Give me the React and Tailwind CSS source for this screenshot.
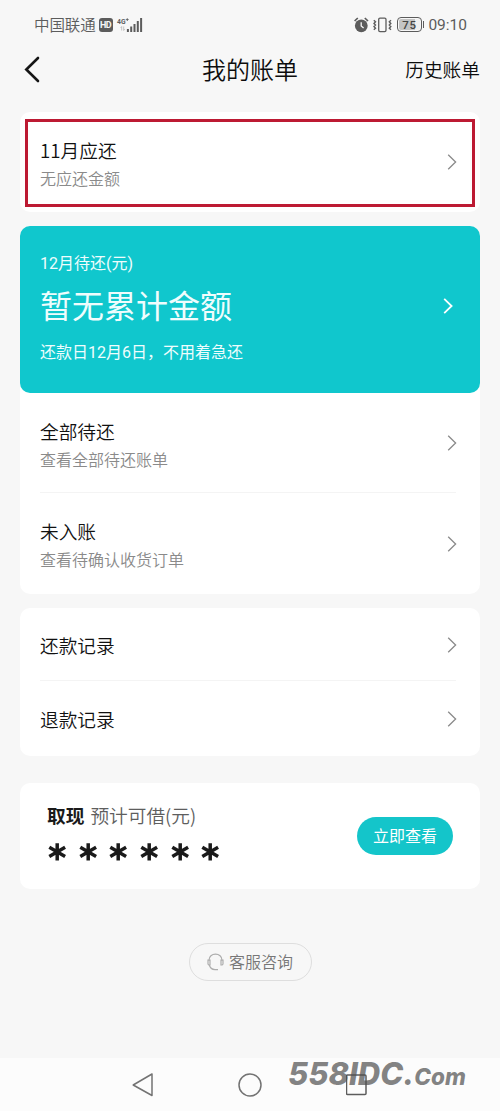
import React from "react";

const Chevron = ({ className = "text-[#8a8a8a] -mr-px", strokeWidth = 1.3 }) => (
  <svg width="10" height="16" viewBox="0 0 10 16" fill="none" stroke="currentColor" strokeWidth={strokeWidth} className={className}>
    <path d="M1.2 0.8 L8.6 8 L1.2 15.2" />
  </svg>
);

const StatusBar = () => (
  <div className="h-[49px] flex items-center justify-between pl-[34px] pr-[33px] text-[#5c5c5c]">
    <div className="flex items-center">
      <span className="text-[15.5px] leading-none tracking-[-0.1px]">中国联通</span>
      <span className="ml-[3px] w-[14px] h-[14px] rounded-[3px] bg-[#5c5c5c] text-[#f7f7f7] text-[9px] font-bold leading-[14px] text-center tracking-[-0.4px] font-[Roboto]">
        HD
      </span>
      <svg width="28" height="16" viewBox="0 0 28 16" className="ml-[3px]" fill="#5c5c5c">
        <text x="1" y="7.2" fontFamily="Roboto" fontSize="8" fontWeight="700" textLength="8.5" lengthAdjust="spacingAndGlyphs">4G</text>
        <path d="M9.8 2.2h1v-1h.9v1h1v.9h-1v1h-.9v-1h-1z" />
        <path d="M5.7 9.5v4M4.7 11l1-1.5M7.7 9.5v4M8.7 12l-1 1.5" stroke="#b9b9b9" strokeWidth="0.8" fill="none" />
        <rect x="10.9" y="12" width="2" height="3" />
        <rect x="14.2" y="9.5" width="2" height="5.5" />
        <rect x="17.5" y="7" width="2" height="8" />
        <rect x="20.8" y="4" width="2" height="11" />
        <rect x="24.1" y="1" width="2" height="14" />
      </svg>
    </div>
    <div className="flex items-center">
      <svg width="15" height="16" viewBox="0 0 15 16" className="mr-[4px]">
        <circle cx="7.3" cy="8.8" r="6.4" fill="#5c5c5c" />
        <path d="M0.6 4 L3.8 1 M14 4 L10.8 1" stroke="#5c5c5c" strokeWidth="1.7" />
        <path d="M7.2 5.2 V9 L9.6 11" stroke="#f7f7f7" strokeWidth="1.3" fill="none" />
      </svg>
      <svg width="19" height="16" viewBox="0 0 19 16" className="mr-[5px]" fill="none" stroke="#5c5c5c">
        <rect x="5.7" y="1.2" width="7.3" height="13.4" rx="1.3" strokeWidth="1.3" />
        <path d="M0.8 3.2 l1.7 1.6 l-1.5 1.6 l1.5 1.6 l-1.5 1.6 l1.5 1.6 l-1.7 1.6 M18 3.2 l-1.7 1.6 l1.5 1.6 l-1.5 1.6 l1.5 1.6 l-1.5 1.6 l1.7 1.6" strokeWidth="1.4" />
      </svg>
      <div className="w-[25px] h-[15px] rounded-[4px] border border-[#5c5c5c] p-px">
        <div className="h-full w-full rounded-[2px] bg-[linear-gradient(90deg,#c4c4c4_75%,#f0f0f0_75%)] text-[11.5px] leading-[12px] font-medium text-center tracking-[0.5px] text-[#444] font-[Roboto]">
          75
        </div>
      </div>
      <div className="ml-px mr-[4px] w-[1.5px] h-[7px] bg-[#5c5c5c]" />
      <span className="text-[15.5px] leading-none mt-[2px] font-normal font-[Roboto]">09:10</span>
    </div>
  </div>
);

const Header = () => (
  <div className="h-[63px] grid grid-cols-[1fr_auto_1fr] items-start px-5 text-[#0d0d0d]">
    <svg width="24" height="28" viewBox="0 0 24 28" fill="none" stroke="#151515" strokeWidth="2.6" className="mt-[7px]" strokeLinecap="round">
      <path d="M18 2 L6.3 13.5 L18 25" />
    </svg>
    <h1 className="text-[24px] leading-9 mt-[2px]">我的账单</h1>
    <span className="justify-self-end text-[18.7px] leading-7 mt-[6px]">历史账单</span>
  </div>
);

const Row = ({ title, desc }) => (
  <div className="flex items-center justify-between pr-6 pl-5 h-full">
    <div className={desc ? "pt-[3px]" : ""}>
      <p className="text-[18.7px] leading-7 text-[#111]">{title}</p>
      {desc && <p className="text-[16px] leading-7 text-[#8a8a8a]">{desc}</p>}
    </div>
    <Chevron />
  </div>
);

const Divider = () => <div className="h-px ml-5 mr-6 bg-[#f4f4f4] shrink-0" />;

const App = () => {
  return (
    <div className="w-[500px] h-[1111px] bg-[#f7f7f7] flex flex-col overflow-hidden font-[350] font-['Noto_Sans_CJK_SC',sans-serif]">
      <StatusBar />
      <Header />

      <main className="px-5 flex flex-col flex-1">
        <div className="relative h-[100px] rounded-[10px] bg-white">
          <Row title="11月应还" desc="无应还金额" />
          <div className="absolute left-[5px] top-[7px] w-[450px] h-[88px] border-[3px] border-[#bd1a33]" />
        </div>

        <div className="mt-[14px] h-[368px] rounded-[10px] bg-white flex flex-col">
          <div className="h-[167px] rounded-[10px] bg-[#10c7cd] text-[#effdfd] flex items-center justify-between pl-5 pr-[27px] shrink-0 font-normal font-[Roboto,'Noto_Sans_CJK_SC',sans-serif]">
            <div className="pb-[3px]">
              <p className="text-[16px] leading-6">12月待还(元)</p>
              <p className="text-[32px] leading-[48px] mt-[7px]">暂无累计金额</p>
              <p className="text-[16px] leading-6 mt-[10px]">还款日12月6日，不用着急还</p>
            </div>
            <Chevron className="text-white mb-[7px]" strokeWidth={1.8} />
          </div>
          <div className="h-[99px] pt-px">
            <Row title="全部待还" desc="查看全部待还账单" />
          </div>
          <Divider />
          <div className="h-[101px]">
            <Row title="未入账" desc="查看待确认收货订单" />
          </div>
        </div>

        <div className="mt-[14px] h-[148px] rounded-[10px] bg-white flex flex-col">
          <div className="h-[72px] pt-px">
            <Row title="还款记录" />
          </div>
          <Divider />
          <div className="h-[75px]">
            <Row title="退款记录" />
          </div>
        </div>

        <div className="mt-[27px] h-[106px] rounded-[10px] bg-white flex items-center justify-between pl-[27px] pr-[27px]">
          <div className="pb-[2px]">
            <p className="text-[18.7px] leading-7 text-[#5e5e5e] whitespace-nowrap">
              <span className="font-bold text-[#1a1a1a] mr-[6px]">取现</span>
              预计可借(元)
            </p>
            <div className="flex gap-[10.7px] mt-[8px] h-8 text-[#1a1a1a]">
              {[0, 1, 2, 3, 4, 5].map((i) => (
                <svg key={i} width="20" height="20" viewBox="0 0 20 20" className="mt-[5px]" stroke="currentColor" strokeWidth="3.5">
                  <path d="M10.2 1.2 V18.5 M2.3 5.2 L18.1 14.4 M18.1 5.2 L2.3 14.4" />
                </svg>
              ))}
            </div>
          </div>
          <button className="w-24 h-[38px] pb-[2px] rounded-full bg-[#14c5ca] text-white text-[16px] leading-none font-normal">立即查看</button>
        </div>

        <button className="mt-[54px] self-center w-[123px] h-[38px] rounded-full border border-[#dedede] flex items-center justify-center gap-[5px] text-[#777]">
          <svg width="17" height="18" viewBox="0 0 17 18" fill="none" stroke="#adadad" strokeWidth="1.2">
            <path d="M2 7.2 C2 3.5 5 1.2 8.5 1.2 C12 1.2 15 3.5 15 7.2" />
            <path d="M1 7.2 H3 V12 H1.8 L1 11 Z M16 7.2 H14 V12 H15.2 L16 11 Z" />
            <path d="M2.3 12 C3 14.8 5 16.5 8 16.6 H11" />
          </svg>
          <span className="text-[16px] leading-none pb-[2px]">客服咨询</span>
        </button>
      </main>

      <footer className="relative h-[53px] bg-[#fcfcfc] flex items-center justify-center gap-[84px] shrink-0">
        <svg width="22" height="24" viewBox="0 0 22 24" fill="none" stroke="#737373" strokeWidth="1.5" strokeLinejoin="round">
          <path d="M20 1 V22.5 L1.2 12 Z" />
        </svg>
        <svg width="24" height="24" viewBox="0 0 24 24" fill="none" stroke="#737373" strokeWidth="1.5">
          <circle cx="12" cy="12" r="11" />
        </svg>
        <svg width="22" height="22" viewBox="0 0 22 22" fill="none" stroke="#5c5c5c" strokeWidth="1.5">
          <rect x="0.5" y="1" width="19.5" height="19.5" rx="1" />
        </svg>
        <div className="absolute left-[288px] top-[-2px] flex items-baseline whitespace-nowrap italic text-[#4d4d4d]/70 font-[Inter,sans-serif]">
          <span className="text-[31px] leading-9 font-extrabold">558IDC.</span>
          <span className="text-[22.5px] leading-9 font-extrabold">Com</span>
        </div>
      </footer>
    </div>
  );
};

export default App;
